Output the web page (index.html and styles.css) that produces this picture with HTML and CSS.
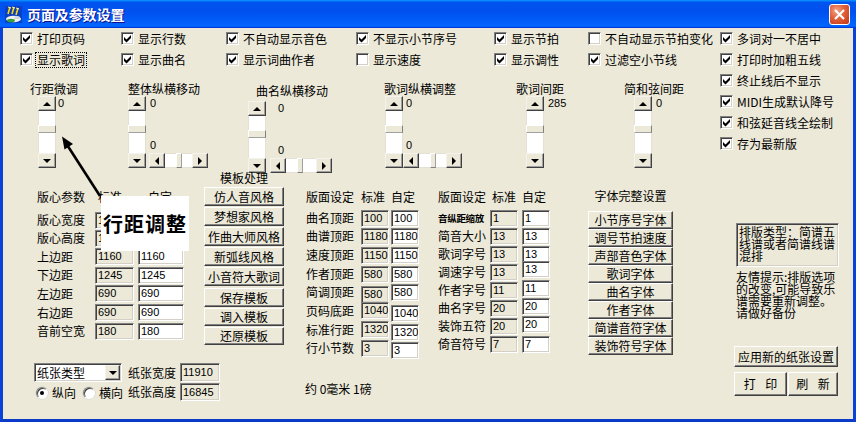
FILE: index.html
```html
<!DOCTYPE html>
<html lang="zh-CN">
<head>
<meta charset="utf-8">
<title>页面及参数设置</title>
<link rel="stylesheet" href="styles.css">
</head>
<body>
<div class="window">
  <div class="titlebar">
    <svg class="app-icon" width="17" height="17" viewBox="0 0 17 17">
      <rect x="0" y="0" width="17" height="17" fill="#0b3fc4"/>
      <path d="M5 1 L3 8 M9 1 L7 8 M13 2 L11 9" stroke="#ffd800" stroke-width="1.6" fill="none"/>
      <path d="M3 1 L6 2 M7 1 L10 2 M11 2 L14 3" stroke="#fff6a0" stroke-width="1" fill="none"/>
      <ellipse cx="8.5" cy="13" rx="7.5" ry="3.2" fill="#f2f2f2"/>
      <ellipse cx="6" cy="14.5" rx="4" ry="1.8" fill="#3aa040"/>
      <ellipse cx="12" cy="11.5" rx="3" ry="1.6" fill="#cfd8e0"/>
    </svg>
    <span class="title">页面及参数设置</span>
    <span class="close"><svg width="13" height="13" viewBox="0 0 13 13"><path d="M2 2 L11 11 M11 2 L2 11" stroke="#fff" stroke-width="2.2"/></svg></span>
  </div>
  <div class="frame">
    <div class="client">
      <div class="top">
        <div class="top-left">
          <div class="checks">
            <div class="cb"><span class="box on"><svg viewBox="0 0 11 11"><path d="M2 4 L4.5 6.5 L9 2 V5 L4.5 9.5 L2 7 Z"/></svg></span><span class="txt">打印页码</span></div>
            <div class="cb"><span class="box on"><svg viewBox="0 0 11 11"><path d="M2 4 L4.5 6.5 L9 2 V5 L4.5 9.5 L2 7 Z"/></svg></span><span class="txt">显示行数</span></div>
            <div class="cb"><span class="box on"><svg viewBox="0 0 11 11"><path d="M2 4 L4.5 6.5 L9 2 V5 L4.5 9.5 L2 7 Z"/></svg></span><span class="txt">不自动显示音色</span></div>
            <div class="cb"><span class="box on"><svg viewBox="0 0 11 11"><path d="M2 4 L4.5 6.5 L9 2 V5 L4.5 9.5 L2 7 Z"/></svg></span><span class="txt">不显示小节序号</span></div>
            <div class="cb"><span class="box on"><svg viewBox="0 0 11 11"><path d="M2 4 L4.5 6.5 L9 2 V5 L4.5 9.5 L2 7 Z"/></svg></span><span class="txt">显示节拍</span></div>
            <div class="cb"><span class="box"></span><span class="txt">不自动显示节拍变化</span></div>
            <div class="cb"><span class="box on"><svg viewBox="0 0 11 11"><path d="M2 4 L4.5 6.5 L9 2 V5 L4.5 9.5 L2 7 Z"/></svg></span><span class="txt focus">显示歌词</span></div>
            <div class="cb"><span class="box on"><svg viewBox="0 0 11 11"><path d="M2 4 L4.5 6.5 L9 2 V5 L4.5 9.5 L2 7 Z"/></svg></span><span class="txt">显示曲名</span></div>
            <div class="cb"><span class="box on"><svg viewBox="0 0 11 11"><path d="M2 4 L4.5 6.5 L9 2 V5 L4.5 9.5 L2 7 Z"/></svg></span><span class="txt">显示词曲作者</span></div>
            <div class="cb"><span class="box"></span><span class="txt">显示速度</span></div>
            <div class="cb"><span class="box on"><svg viewBox="0 0 11 11"><path d="M2 4 L4.5 6.5 L9 2 V5 L4.5 9.5 L2 7 Z"/></svg></span><span class="txt">显示调性</span></div>
            <div class="cb"><span class="box on"><svg viewBox="0 0 11 11"><path d="M2 4 L4.5 6.5 L9 2 V5 L4.5 9.5 L2 7 Z"/></svg></span><span class="txt">过滤空小节线</span></div>
          </div>
          <div class="spins">
            <div class="sg g1">
              <div class="sg-label">行距微调</div>
              <div class="sg-body">
                <div class="vsb"><span class="sbb up"></span><span class="trk t1"></span><span class="thumb-v"></span><span class="trk t2"></span><span class="sbb down"></span></div>
                <div class="side"><span class="val">0</span></div>
              </div>
            </div>
            <div class="sg g2">
              <div class="sg-label">整体纵横移动</div>
              <div class="sg-body">
                <div class="vsb"><span class="sbb up"></span><span class="trk t1"></span><span class="thumb-v"></span><span class="trk t2"></span><span class="sbb down"></span></div>
                <div class="side"><span class="val">0</span><span class="val val2">0</span>
                  <div class="hsb"><span class="sbb left"></span><span class="trk h1"></span><span class="thumb-h"></span><span class="trk h2"></span><span class="sbb right"></span></div>
                </div>
              </div>
            </div>
            <div class="sg g3">
              <div class="sg-label">曲名纵横移动</div>
              <div class="sg-body">
                <div class="vsb"><span class="sbb up"></span><span class="trk t1"></span><span class="thumb-v"></span><span class="trk t2"></span><span class="sbb down"></span></div>
                <div class="side"><span class="val">0</span><span class="val val2">0</span>
                  <div class="hsb"><span class="sbb left"></span><span class="trk h1"></span><span class="thumb-h"></span><span class="trk h2"></span><span class="sbb right"></span></div>
                </div>
              </div>
            </div>
            <div class="sg g4">
              <div class="sg-label">歌词纵横调整</div>
              <div class="sg-body">
                <div class="vsb"><span class="sbb up"></span><span class="trk t1"></span><span class="thumb-v"></span><span class="trk t2"></span><span class="sbb down"></span></div>
                <div class="side"><span class="val">0</span><span class="val val2">0</span>
                  <div class="hsb"><span class="sbb left"></span><span class="trk h1"></span><span class="thumb-h"></span><span class="trk h2"></span><span class="sbb right"></span></div>
                </div>
              </div>
            </div>
            <div class="sg g5">
              <div class="sg-label">歌词间距</div>
              <div class="sg-body">
                <div class="vsb"><span class="sbb up"></span><span class="trk t1"></span><span class="thumb-v"></span><span class="trk t2"></span><span class="sbb down"></span></div>
                <div class="side"><span class="val">285</span></div>
              </div>
            </div>
            <div class="sg g6">
              <div class="sg-label">简和弦间距</div>
              <div class="sg-body">
                <div class="vsb"><span class="sbb up"></span><span class="trk t1"></span><span class="thumb-v"></span><span class="trk t2"></span><span class="sbb down"></span></div>
                <div class="side"><span class="val">0</span></div>
              </div>
            </div>
          </div>
        </div>
        <div class="top-right">
          <div class="cb"><span class="box on"><svg viewBox="0 0 11 11"><path d="M2 4 L4.5 6.5 L9 2 V5 L4.5 9.5 L2 7 Z"/></svg></span><span class="txt">多词对一不居中</span></div>
          <div class="cb"><span class="box on"><svg viewBox="0 0 11 11"><path d="M2 4 L4.5 6.5 L9 2 V5 L4.5 9.5 L2 7 Z"/></svg></span><span class="txt">打印时加粗五线</span></div>
          <div class="cb"><span class="box on"><svg viewBox="0 0 11 11"><path d="M2 4 L4.5 6.5 L9 2 V5 L4.5 9.5 L2 7 Z"/></svg></span><span class="txt">终止线后不显示</span></div>
          <div class="cb"><span class="box on"><svg viewBox="0 0 11 11"><path d="M2 4 L4.5 6.5 L9 2 V5 L4.5 9.5 L2 7 Z"/></svg></span><span class="txt">MIDI生成默认降号</span></div>
          <div class="cb"><span class="box on"><svg viewBox="0 0 11 11"><path d="M2 4 L4.5 6.5 L9 2 V5 L4.5 9.5 L2 7 Z"/></svg></span><span class="txt">和弦延音线全绘制</span></div>
          <div class="cb"><span class="box on"><svg viewBox="0 0 11 11"><path d="M2 4 L4.5 6.5 L9 2 V5 L4.5 9.5 L2 7 Z"/></svg></span><span class="txt">存为最新版</span></div>
        </div>
      </div>

      <div class="lower">
        <div class="col col1">
          <div class="tbl1">
            <span class="hd lbl">版心参数</span><span class="hd hs">标准</span><span class="hd hc">自定</span>
            <span class="lbl">版心宽度</span><span class="field gray w39">1</span><span class="field w46"></span>
            <span class="lbl">版心高度</span><span class="field gray w39">1</span><span class="field w46"></span>
            <span class="lbl">上边距</span><span class="field gray w39">1160</span><span class="field w46">1160</span>
            <span class="lbl">下边距</span><span class="field gray w39">1245</span><span class="field w46">1245</span>
            <span class="lbl">左边距</span><span class="field gray w39">690</span><span class="field w46">690</span>
            <span class="lbl">右边距</span><span class="field gray w39">690</span><span class="field w46">690</span>
            <span class="lbl">音前空宽</span><span class="field gray w39">180</span><span class="field w46">180</span>
          </div>
          <div class="paper">
            <div class="paper-left">
              <div class="combo"><span class="combo-text">纸张类型</span><span class="combo-btn"></span></div>
              <div class="radios">
                <span class="radio on"></span><span class="rtxt">纵向</span>
                <span class="radio r2"></span><span class="rtxt">横向</span>
              </div>
            </div>
            <div class="paper-right">
              <span class="plabel">纸张宽度</span><span class="field gray pf">11910</span>
              <span class="plabel">纸张高度</span><span class="field gray pf">16845</span>
            </div>
          </div>
        </div>

        <div class="col col2">
          <div class="col-title">模板处理</div>
          <div class="btn tb first">仿人音风格</div>
          <div class="btn tb">梦想家风格</div>
          <div class="btn tb">作曲大师风格</div>
          <div class="btn tb">新弧线风格</div>
          <div class="btn tb">小音符大歌词</div>
          <div class="btn tb save">保存模板</div>
          <div class="btn tb sm">调入模板</div>
          <div class="btn tb sm">还原模板</div>
        </div>

        <div class="col col3">
          <div class="tbl3">
            <span class="hd lbl3">版面设定</span><span class="hd">标准</span><span class="hd">自定</span>
            <span class="lbl3">曲名顶距</span><span class="field gray w28">100</span><span class="field w28">100</span>
            <span class="lbl3">曲谱顶距</span><span class="field gray w28">1180</span><span class="field w28">1180</span>
            <span class="lbl3">速度顶距</span><span class="field gray w28">1150</span><span class="field w28">1150</span>
            <span class="lbl3">作者顶距</span><span class="field gray w28">580</span><span class="field w28">580</span>
            <span class="lbl3">简调顶距</span><span class="field gray w28 lower2">580</span><span class="field w28">580</span>
            <span class="lbl3">页码底距</span><span class="field gray w28">1040</span><span class="field w28 lower3">1040</span>
            <span class="lbl3">标准行距</span><span class="field gray w28">1320</span><span class="field w28 lower3">1320</span>
            <span class="lbl3">行小节数</span><span class="field gray w28">3</span><span class="field w28 lower2">3</span>
          </div>
          <div class="approx">约 0毫米 1磅</div>
        </div>

        <div class="col col4">
          <div class="tbl4">
            <span class="hd lbl4">版面设定</span><span class="hd hs4">标准</span><span class="hd">自定</span>
            <span class="lbl4 tiny">音纵距缩放</span><span class="field gray w28">1</span><span class="field w28">1</span>
            <span class="lbl4">简音大小</span><span class="field gray w28">13</span><span class="field w28">13</span>
            <span class="lbl4">歌词字号</span><span class="field gray w28">13</span><span class="field w28">13</span>
            <span class="lbl4">调速字号</span><span class="field gray w28">13</span><span class="field w28 upper3">13</span>
            <span class="lbl4">作者字号</span><span class="field gray w28">11</span><span class="field w28 upper2">11</span>
            <span class="lbl4">曲名字号</span><span class="field gray w28">20</span><span class="field w28 upper2">20</span>
            <span class="lbl4">装饰五符</span><span class="field gray w28">20</span><span class="field w28 upper2">20</span>
            <span class="lbl4">倚音符号</span><span class="field gray w28">7</span><span class="field w28">7</span>
          </div>
        </div>

        <div class="col col5">
          <div class="col-title">字体完整设置</div>
          <div class="fbtns">
            <div class="btn fb">小节序号字体</div>
            <div class="btn fb">调号节拍速度</div>
            <div class="btn fb">声部音色字体</div>
            <div class="btn fb">歌词字体</div>
            <div class="btn fb">曲名字体</div>
            <div class="btn fb">作者字体</div>
            <div class="btn fb">简谱音符字体</div>
            <div class="btn fb">装饰符号字体</div>
          </div>
        </div>

        <div class="col col6">
          <div class="typebox">排版类型：简谱五线谱或者简谱线谱混排</div>
          <div class="tip">友情提示:排版选项的改变,可能导致乐谱需要重新调整。请做好备份</div>
          <div class="btn apply">应用新的纸张设置</div>
          <div class="btnrow">
            <div class="btn act pr">打 印</div>
            <div class="btn act rf">刷 新</div>
          </div>
        </div>
      </div>

      <svg class="arrow" width="850" height="391" viewBox="3 28 850 391">
        <line x1="100" y1="196" x2="66.5" y2="144" stroke="#000" stroke-width="2.6"/>
        <polygon points="62,136.5 73,144 64.5,149.5" fill="#000"/>
      </svg>
      <div class="callout">行距调整</div>
    </div>
  </div>
</div>
</body>
</html>
```

FILE: styles.css
```css
* { box-sizing: border-box; }
html, body { margin: 0; padding: 0; }
body {
  width: 856px;
  height: 422px;
  overflow: hidden;
  background: #ece9d8;
  font-family: "Noto Sans CJK SC", sans-serif;
  font-size: 12px;
  color: #000;
}

.window {
  width: 856px;
  height: 422px;
  display: flex;
  flex-direction: column;
}

/* title bar */
.titlebar {
  height: 28px;
  flex: none;
  display: flex;
  align-items: center;
  padding-left: 5px;
  background: linear-gradient(180deg, #0997ff 0%, #0053ee 9%, #0050ee 40%, #0062fb 85%, #0066ff 92%, #005bff 95%, #003dd7 97%, #003dd7 100%);
}
.app-icon { flex: none; margin-top: 1px; }
.title {
  margin-left: 5px;
  color: #fff;
  font-weight: 700;
  font-size: 14px;
  line-height: 16px;
  letter-spacing: -0.1px;
  text-shadow: 1px 1px #0f1089;
}
.close {
  margin-left: auto;
  margin-right: 6px;
  width: 21px;
  height: 21px;
  border: 1px solid #fff;
  border-radius: 3px;
  background: radial-gradient(circle at 35% 30%, #f4a58a 0%, #e3643f 40%, #c8401c 85%, #b3350f 100%);
  display: flex;
  align-items: center;
  justify-content: center;
}

/* frame */
.frame {
  flex: 1;
  display: flex;
  border-left: 3px solid #0842d6;
  border-right: 3px solid #0842d6;
  border-bottom: 3px solid #0a3bc8;
}
.client {
  position: relative;
  flex: 1;
  background: #ece9d8;
}

/* top region */
.top {
  height: 142px;
  display: flex;
}
.top-left {
  width: 717px;
  padding-left: 17px;
}
.checks {
  display: grid;
  grid-template-columns: 101px 105px 130px 138px 94px 132px;
  grid-auto-rows: 21px;
}
.cb {
  display: flex;
  align-items: center;
  height: 21px;
  white-space: nowrap;
}
.box {
  flex: none;
  width: 13px;
  height: 13px;
  margin-right: 4px;
  background: #fff;
  border: 1px solid;
  border-color: #808080 #fff #fff #808080;
  box-shadow: inset 1px 1px #404040, inset -1px -1px #d4d0c8;
}
.box svg { display: block; width: 11px; height: 11px; fill: #000; }
.txt { line-height: 14px; }
.focus {
  outline: 1px dotted #000;
  padding: 0 1px;
  margin-left: -1px;
}
.top-right { display: flex; flex-direction: column; }

/* spin groups */
.spins {
  display: flex;
  margin-left: 10px;
  margin-top: 12px;
}
.sg { display: flex; flex-direction: column; flex: none; }
.sg-label { height: 14px; line-height: 14px; white-space: nowrap; }
.sg-body { display: flex; }
.g1 { width: 98px; }
.g1 .sg-body { padding-left: 8px; }
.g2 { width: 120px; }
.g3 { width: 136px; padding-top: 2px; }
.g3 .sg-label { padding-left: 8px; }
.g3 .sg-body { margin-top: 3px; }
.g4 { width: 132px; }
.g4 .sg-body { padding-left: 1px; }
.g5 { width: 108px; }
.g5 .sg-body { padding-left: 10px; }
.g6 { width: 90px; }
.g6 .sg-body { padding-left: 10px; }

.vsb {
  flex: none;
  width: 18px;
  height: 72px;
  display: flex;
  flex-direction: column;
}
.sbb {
  flex: none;
  display: flex;
  align-items: center;
  justify-content: center;
  background: #ece9d8;
  border: 1px solid;
  border-color: #f4f3ee #404040 #404040 #f4f3ee;
  box-shadow: inset -1px -1px #a0a0a0;
}
.vsb .sbb { height: 15px; }
.trk { background: #fff; }
.t1 { height: 14px; border-left: 1px solid #e4e1d4; border-right: 1px solid #e4e1d4; }
.t2 { flex: 1; border-left: 1px solid #e4e1d4; border-right: 1px solid #e4e1d4; }
.thumb-v {
  flex: none;
  height: 8px;
  background: #ece9d8;
  border-top: 1px solid #fff;
  border-bottom: 1px solid #a0a0a0;
  border-left: 1px solid #fff;
  border-right: 1px solid #808080;
}
.up::after, .down::after, .left::after, .right::after { content: ""; display: block; width: 0; height: 0; }
.up::after { border-left: 4px solid transparent; border-right: 4px solid transparent; border-bottom: 4px solid #000; }
.down::after { border-left: 4px solid transparent; border-right: 4px solid transparent; border-top: 4px solid #000; }
.left::after { border-top: 4px solid transparent; border-bottom: 4px solid transparent; border-right: 4px solid #000; }
.right::after { border-top: 4px solid transparent; border-bottom: 4px solid transparent; border-left: 4px solid #000; }

.side {
  display: flex;
  flex-direction: column;
  height: 72px;
  font-family: "Liberation Sans", sans-serif;
  font-size: 11px;
}
.val { line-height: 14px; padding-left: 2px; }
.val2 { margin-top: auto; }
.hsb {
  margin-top: 1px;
  width: 59px;
  height: 15px;
  display: flex;
}
.hsb .sbb { width: 16px; }
.h1 { width: 11px; border-top: 1px solid #e4e1d4; border-bottom: 1px solid #e4e1d4; }
.h2 { flex: 1; border-top: 1px solid #e4e1d4; border-bottom: 1px solid #e4e1d4; }
.thumb-h {
  flex: none;
  width: 6px;
  background: #ece9d8;
  border-left: 1px solid #fff;
  border-right: 1px solid #a0a0a0;
  border-top: 1px solid #fff;
  border-bottom: 1px solid #808080;
}
.g2 .val { padding-left: 4px; }
.g2 .hsb { margin-left: 3px; }
.g3 .val { padding-left: 12px; }
.g3 .hsb { margin-left: 4px; width: 62px; }
.g4 .val { padding-left: 3px; }
.g5 .val, .g6 .val { padding-left: 4px; }

/* lower region */
.lower {
  display: flex;
  padding-left: 31px;
}
.col { flex: none; display: flex; flex-direction: column; }
.col1 { width: 170px; padding-top: 20px; }
.col2 { width: 80px; }
.col3 { width: 113px; margin-left: 21px; padding-top: 20px; }
.col4 { width: 113px; margin-left: 19px; padding-top: 20px; }
.col5 { width: 85px; margin-left: 38px; padding-top: 19px; }
.col6 { width: 105px; margin-left: 61px; padding-top: 53px; }

.hd { align-self: start; line-height: 14px; white-space: nowrap; }
.field {
  display: block;
  height: 17px;
  background: #fff;
  border: 1px solid;
  border-color: #808080 #fff #fff #808080;
  box-shadow: inset 1px 1px #404040, inset -1px -1px #d4d0c8;
  font-family: "Liberation Sans", sans-serif;
  font-size: 11px;
  line-height: 15px;
  padding-left: 2px;
  overflow: hidden;
  white-space: nowrap;
}
.field.gray { background: #ece9d8; }
.w39 { width: 39px; }
.w46 { width: 46px; }
.w28 { width: 28px; }

.tbl1 {
  display: grid;
  grid-template-columns: 61px 43px 46px;
  grid-template-rows: 21px 18px 18px 19px 18px 19px 19px 18px;
  align-items: center;
}
.lbl { padding-left: 3px; line-height: 14px; white-space: nowrap; }
.hs { padding-left: 3px; }
.hc { padding-left: 10px; }

.paper { display: flex; margin-top: 23px; }
.paper-left { width: 94px; flex: none; }
.combo {
  width: 88px;
  height: 19px;
  display: flex;
  align-items: center;
  background: #fff;
  border: 1px solid;
  border-color: #808080 #fff #fff #808080;
  box-shadow: inset 1px 1px #404040, inset -1px -1px #d4d0c8;
  padding: 0 1px 0 2px;
}
.combo-text { flex: 1; line-height: 14px; }
.combo-btn {
  flex: none;
  width: 15px;
  height: 15px;
  display: flex;
  align-items: center;
  justify-content: center;
  background: #ece9d8;
  border: 1px solid;
  border-color: #f4f3ee #404040 #404040 #f4f3ee;
  box-shadow: inset -1px -1px #a0a0a0;
}
.combo-btn::after { content: ""; border-left: 4px solid transparent; border-right: 4px solid transparent; border-top: 4px solid #000; }
.radios { display: flex; align-items: center; margin-top: 4px; height: 14px; padding-left: 2px; }
.radio {
  flex: none;
  width: 12px;
  height: 12px;
  border-radius: 50%;
  background: #fff;
  border: 1px solid;
  border-color: #808080 #fff #fff #808080;
  box-shadow: inset 1px 1px #404040, 0 0 0 0.5px #d4d0c8;
  display: flex;
  align-items: center;
  justify-content: center;
}
.radio.on::after { content: ""; width: 4px; height: 4px; border-radius: 50%; background: #000; }
.rtxt { margin-left: 4px; line-height: 14px; }
.r2 { margin-left: 7px; }
.paper-right {
  display: grid;
  grid-template-columns: 52px 40px;
  grid-template-rows: 19px 18px;
  row-gap: 1px;
  align-items: center;
}
.plabel { line-height: 14px; white-space: nowrap; }
.pf { width: 40px; height: 19px; line-height: 17px; }
.paper-right .pf:last-child { height: 18px; line-height: 16px; }

.col-title { line-height: 14px; text-align: center; white-space: nowrap; }
.col2 .col-title { margin-top: 1px; }
.btn {
  display: flex;
  align-items: center;
  justify-content: center;
  background: #ece9d8;
  border: 1px solid;
  border-color: #fff #404040 #404040 #fff;
  box-shadow: inset -1px -1px #808080;
  white-space: nowrap;
  line-height: 14px;
}
.tb { height: 19px; margin-top: 1px; }
.tb.first { margin-top: 2px; }
.tb.save { margin-top: 2px; }
.tb.sm { height: 18px; }

.tbl3 {
  display: grid;
  grid-template-columns: 56px 30px 27px;
  grid-template-rows: 19px 18px 18px 20px 18px 18px 19px 19px 18px;
  align-items: center;
}
.lbl3 { padding-left: 1px; line-height: 14px; white-space: nowrap; }
.tbl3 .hd:first-child { padding-left: 1px; }
.lower2 { margin-top: 4px; }
.lower3 { margin-top: 6px; }
.approx { margin-top: 25px; line-height: 14px; white-space: nowrap; }

.tbl4 {
  display: grid;
  grid-template-columns: 53px 32px 28px;
  grid-template-rows: 19px repeat(8, 18px);
  align-items: center;
}
.lbl4 { padding-left: 1px; line-height: 14px; white-space: nowrap; }
.hs4 { padding-left: 2px; }
.tiny { font-size: 9.5px; font-weight: 700; letter-spacing: -0.3px; }
.upper2 { margin-bottom: 3px; }
.upper3 { margin-bottom: 6px; }

.fbtns { margin-top: 8px; display: flex; flex-direction: column; }
.fb { height: 18px; }

.typebox {
  margin-left: 2px;
  width: 103px;
  height: 44px;
  background: #ece9d8;
  border: 1px solid;
  border-color: #808080 #fff #fff #808080;
  box-shadow: inset 1px 1px #404040, inset -1px -1px #d4d0c8;
  padding: 2px 2px 0 2px;
  line-height: 12px;
  word-break: break-all;
}
.tip {
  margin-left: 2px;
  margin-top: 4px;
  width: 104px;
  line-height: 12px;
  word-break: break-all;
}
.apply { margin-top: 27px; width: 104px; height: 21px; }
.btnrow { display: flex; margin-top: 5px; }
.act { height: 24px; word-spacing: 7px; }
.pr { width: 53px; }
.rf { width: 50px; margin-left: 1px; }

/* overlays */
.arrow { position: absolute; left: 0; top: 0; pointer-events: none; }
.callout {
  position: absolute;
  left: 98px;
  top: 168px;
  width: 88px;
  height: 55px;
  background: #fff;
  font-weight: 700;
  font-size: 20px;
  line-height: 55px;
  text-align: center;
  letter-spacing: 1px;
}
```
